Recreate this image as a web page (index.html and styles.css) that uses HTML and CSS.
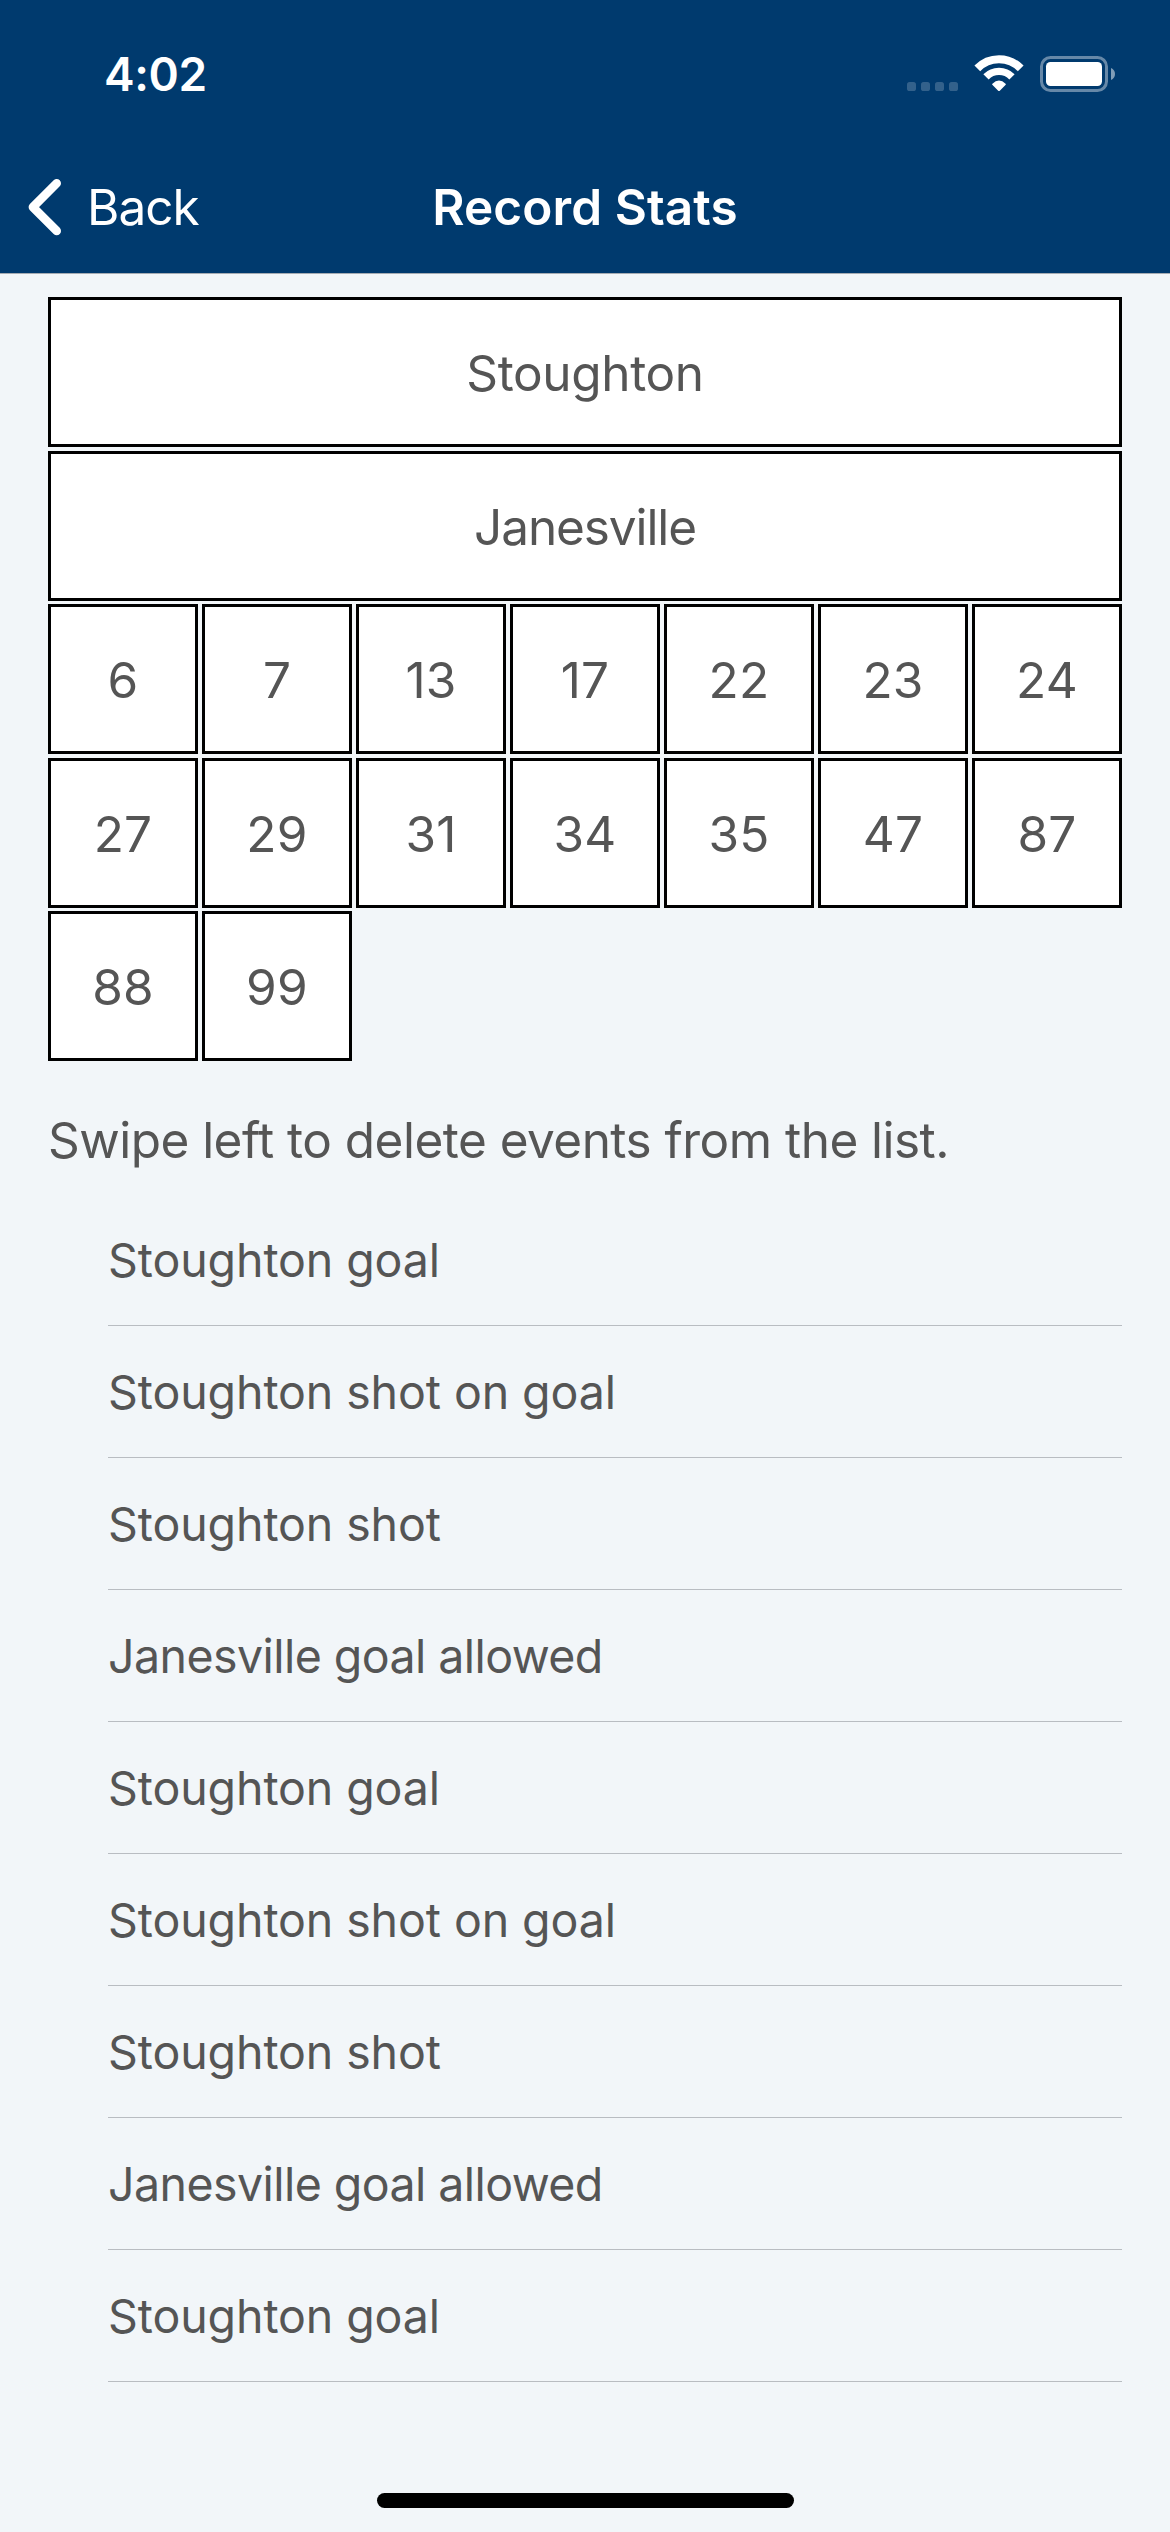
FILE: index.html
```html
<!DOCTYPE html>
<html lang="en">
<head>
<meta charset="utf-8">
<title>Record Stats</title>
<link rel="stylesheet" href="styles.css">
</head>
<body>
<header class="header">
  <div class="status">
    <span class="time">4:02</span>
    <div class="status-icons">
      <svg class="signal" width="51" height="9" viewBox="0 0 51 9" fill="#fff" fill-opacity=".2">
        <rect width="9" height="9" rx="2.6"/>
        <rect x="14" width="9" height="9" rx="2.6"/>
        <rect x="28" width="9" height="9" rx="2.6"/>
        <rect x="42" width="9" height="9" rx="2.6"/>
      </svg>
      <svg class="wifi" width="50" height="37" viewBox="974 55 50 37" fill="none" stroke="#fff">
        <path stroke-width="8" d="M977.3 68.4A30.2 30.2 0 0 1 1020.7 68.4"/>
        <path stroke-width="7.4" d="M986 76.8A18.2 18.2 0 0 1 1012 76.8"/>
        <path fill="#fff" stroke="none" d="M998.2 90.8L992.3 84.8Q991.8 84.2 992.4 83.7Q999 77.1 1005.6 83.7Q1006.2 84.2 1005.7 84.8L999.8 90.8Q999 91.4 998.2 90.8Z"/>
      </svg>
      <svg class="battery" width="75" height="36" viewBox="0 0 75 36" fill="#fff">
        <rect x="1.5" y="1.5" width="65" height="33" rx="9" fill="none" stroke="#fff" stroke-opacity=".4" stroke-width="3"/>
        <rect x="6" y="6" width="56" height="24" rx="4.5"/>
        <path fill-opacity=".5" d="M71 12Q75 13.8 75 18Q75 22.2 71 24Z"/>
      </svg>
    </div>
  </div>
  <nav class="nav">
    <a class="back">
      <svg width="35" height="58" viewBox="0 0 35 58" fill="none" stroke="#fff" stroke-width="8.6" stroke-linecap="round" stroke-linejoin="round"><path d="M28.7 5.3L4.9 29.1L28.7 52.9"/></svg>
      <span>Back</span>
    </a>
    <h1 class="title">Record Stats</h1>
  </nav>
</header>
<main class="content">
  <section class="board">
    <button class="cell team stoughton">Stoughton</button>
    <button class="cell team janesville">Janesville</button>
    <button class="cell">6</button>
    <button class="cell">7</button>
    <button class="cell">13</button>
    <button class="cell">17</button>
    <button class="cell">22</button>
    <button class="cell">23</button>
    <button class="cell">24</button>
    <button class="cell">27</button>
    <button class="cell">29</button>
    <button class="cell">31</button>
    <button class="cell">34</button>
    <button class="cell">35</button>
    <button class="cell">47</button>
    <button class="cell">87</button>
    <button class="cell">88</button>
    <button class="cell">99</button>
  </section>
  <p class="hint">Swipe left to delete events from the list.</p>
  <ul class="events">
    <li class="event">Stoughton goal</li>
    <li class="event">Stoughton shot on goal</li>
    <li class="event">Stoughton shot</li>
    <li class="event tight">Janesville goal allowed</li>
    <li class="event">Stoughton goal</li>
    <li class="event">Stoughton shot on goal</li>
    <li class="event">Stoughton shot</li>
    <li class="event tight">Janesville goal allowed</li>
    <li class="event">Stoughton goal</li>
  </ul>
</main>
<footer class="home"><div class="home-bar"></div></footer>
</body>
</html>
```
FILE: styles.css
```css
* { box-sizing: border-box; margin: 0; padding: 0; }

body {
  width: 1170px;
  height: 2532px;
  display: flex;
  flex-direction: column;
  overflow: hidden;
  background: #f2f6f9;
  color: #555;
  font: 400 49.5px "Inter", "Liberation Sans", sans-serif;
}

.header {
  height: 274px;
  background: #003a6e;
  border-bottom: 1px solid #a6acb3;
  color: #fff;
}

.status {
  height: 141px;
  padding: 0 55px 0 104px;
  display: flex;
  justify-content: space-between;
}

.time {
  font-size: 46px;
  font-weight: 600;
  line-height: 148px;
  letter-spacing: -0.4px;
}

.status-icons {
  height: 92px;
  display: flex;
  align-items: flex-end;
}

.signal { margin: 0 16px 1px 0; }
.wifi { margin-right: 16px; }

.nav {
  height: 132px;
  display: grid;
  grid-template-columns: 1fr auto 1fr;
  align-items: center;
}

.back {
  display: flex;
  align-items: center;
  gap: 24px;
  padding-left: 28px;
  letter-spacing: -1px;
}

.title { font-size: 49.5px; font-weight: 600; letter-spacing: 0.1px; }

.content { padding: 23px 48px 0; }

.board {
  display: grid;
  grid-template-columns: repeat(7, 150px);
  grid-auto-rows: 150px;
  gap: 3.6px 4px;
}

.cell {
  border: 3px solid #000;
  background: #fff;
  color: inherit;
  font: inherit;
  letter-spacing: 0.2px;
  padding-top: 2px;
}

.team { grid-column: 1 / -1; }
.stoughton { letter-spacing: -0.38px; }
.janesville { letter-spacing: -1.1px; }

.hint {
  margin-top: 49px;
  line-height: 60px;
  letter-spacing: -0.53px;
}

.events {
  margin: 24px 0 0 60px;
  list-style: none;
}

.event {
  height: 132px;
  border-bottom: 1px solid #b9bdc2;
  font-size: 46.5px;
  line-height: 132px;
  letter-spacing: -0.1px;
}

.tight { letter-spacing: -0.56px; }

.home {
  margin-top: auto;
  padding-bottom: 24px;
  display: flex;
  justify-content: center;
}

.home-bar {
  width: 417px;
  height: 15px;
  border-radius: 8px;
  background: #000;
}
```
